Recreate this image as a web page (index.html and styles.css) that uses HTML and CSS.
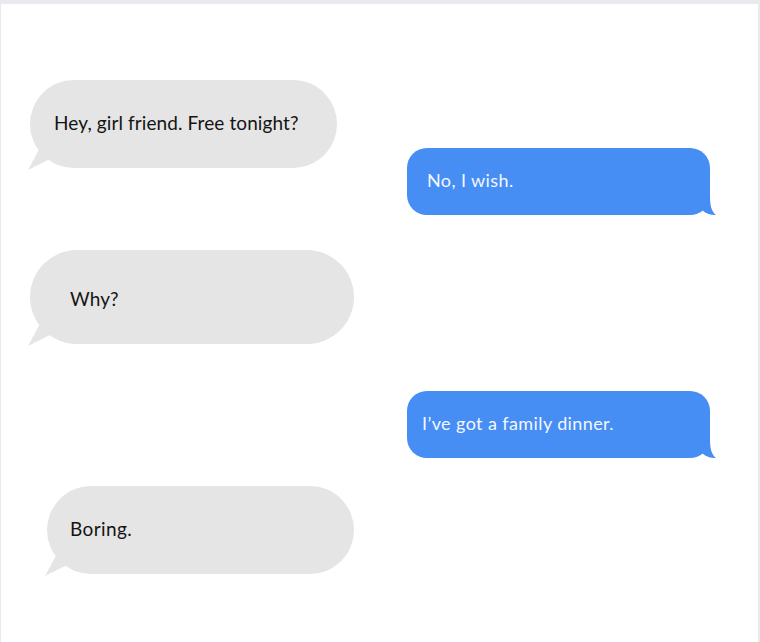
FILE: index.html
```html
<!DOCTYPE html>
<html lang="en">
<head>
<meta charset="utf-8">
<title>Chat</title>
<link rel="stylesheet" href="styles.css">
</head>
<body>
<div class="screen">
  <div class="thread">
    <div class="msg in m1">
      <span class="text">Hey, girl friend. Free tonight?</span>
      <span class="tail"></span>
    </div>
    <div class="msg out m2">
      <span class="text">No, I wish.</span>
      <svg class="otail" viewBox="0 0 34 20" width="34" height="20"><path d="M0 0 L27 0 C27 10 28 16 33 20 C28 20 23 19 19 15 C15 18 11 19 6 19 L0 19 Z"/></svg>
    </div>
    <div class="msg in m3">
      <span class="text">Why?</span>
      <span class="tail"></span>
    </div>
    <div class="msg out m4">
      <span class="text">I’ve got a family dinner.</span>
      <svg class="otail" viewBox="0 0 34 20" width="34" height="20"><path d="M0 0 L27 0 C27 10 28 16 33 20 C28 20 23 19 19 15 C15 18 11 19 6 19 L0 19 Z"/></svg>
    </div>
    <div class="msg in m5">
      <span class="text">Boring.</span>
      <span class="tail"></span>
    </div>
  </div>
</div>
</body>
</html>
```
FILE: styles.css
```css
html, body {
  margin: 0;
  padding: 0;
  background: #e9eaef;
}
body {
  width: 760px;
  height: 642px;
  overflow: hidden;
  font-family: "Lato", "Open Sans", sans-serif;
}
.screen {
  margin: 4px 2px 0 1px;
  height: 638px;
  background: #ffffff;
}
.thread {
  display: flex;
  flex-direction: column;
  align-items: flex-start;
  padding-top: 76px;
}
.msg {
  position: relative;
  display: flex;
  align-items: center;
  box-sizing: border-box;
  font-size: 19px;
  letter-spacing: 0.1px;
  padding-bottom: 3px;
}
.in {
  background: #e5e5e5;
  color: #141414;
  border-radius: 47px;
}
.out {
  background: #468df4;
  color: #f4f7ff;
  border-radius: 20px;
  width: 303px;
  height: 67px;
  margin-left: 406px;
  font-size: 18px;
  letter-spacing: 0.4px;
}
.tail {
  position: absolute;
  left: -2px;
  bottom: -2px;
  width: 26px;
  height: 24px;
  background: #e5e5e5;
  clip-path: polygon(0 24px, 13px 0, 26px 0, 26px 11px);
}
.otail {
  position: absolute;
  right: -7px;
  bottom: 0;
  fill: #468df4;
}
.m1 {
  width: 307px;
  height: 88px;
  margin-left: 29px;
  padding-left: 24px;
  border-radius: 44px;
}
.m2 {
  margin-top: -20px;
  padding-left: 20px;
}
.m3 {
  width: 324px;
  height: 94px;
  margin-top: 35px;
  margin-left: 29px;
  padding-left: 40px;
  padding-top: 3px;
  padding-bottom: 0;
}
.m4 {
  margin-top: 47px;
  padding-left: 15px;
}
.m5 {
  width: 307px;
  height: 88px;
  margin-top: 28px;
  margin-left: 46px;
  padding-left: 23px;
  border-radius: 44px;
  letter-spacing: 0.4px;
}
```
